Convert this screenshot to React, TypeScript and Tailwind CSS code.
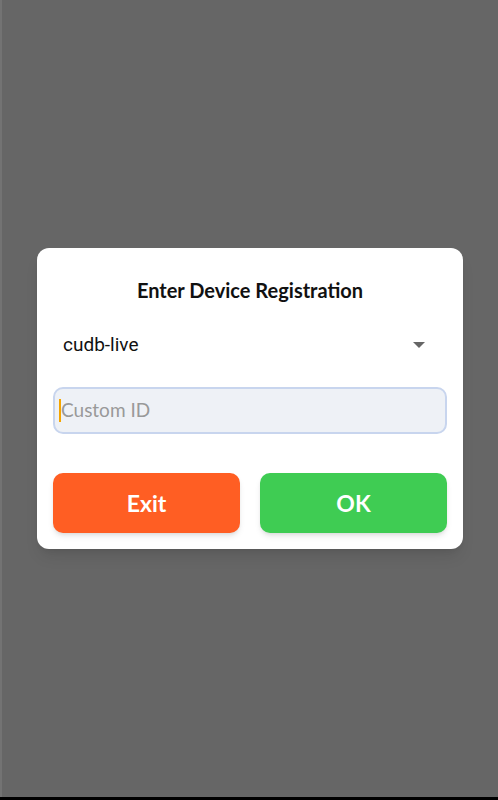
export default function App() {
  return (
    <div className="relative flex h-[800px] w-[498px] items-center justify-center bg-[#666666] font-['Lato',sans-serif]">
      <div className="absolute left-0 top-0 h-[797px] w-[2px] bg-[#737373]" />
      <div className="absolute bottom-0 left-0 h-[3px] w-full bg-black" />
      <div className="ml-[2px] mt-[-3px] w-[426px] rounded-[12px] bg-white px-4 pb-4 pt-[30px] shadow-lg">
        <p className="text-center text-[20px] font-bold leading-[24px] text-[#111]">Enter Device Registration</p>
        <div className="mt-[19px] flex h-[48px] items-center justify-between pl-[10px] pr-[22px] font-['Roboto',sans-serif]">
          <span className="text-[19px] text-[#111]">cudb-live</span>
          <svg width="12" height="6" viewBox="0 0 12 6">
            <path d="M0 0h12L6 6z" fill="#666" />
          </svg>
        </div>
        <div className="mt-[18px] flex h-[47px] items-center rounded-[10px] border-2 border-[#c8d5ee] bg-[#eef1f6] pl-[4px]">
          <div className="h-[23px] w-[2px] bg-[#f5a500]" />
          <span className="text-[19px] text-[#999]">Custom ID</span>
        </div>
        <div className="mt-[39px] flex gap-[20px]">
          <button className="flex h-[60px] flex-1 items-center justify-center rounded-[10px] bg-[#ff5e23] text-[23px] font-bold text-white shadow-md">Exit</button>
          <button className="flex h-[60px] flex-1 items-center justify-center rounded-[10px] bg-[#3fcc53] text-[23px] font-bold text-white shadow-md">OK</button>
        </div>
      </div>
    </div>
  );
}
